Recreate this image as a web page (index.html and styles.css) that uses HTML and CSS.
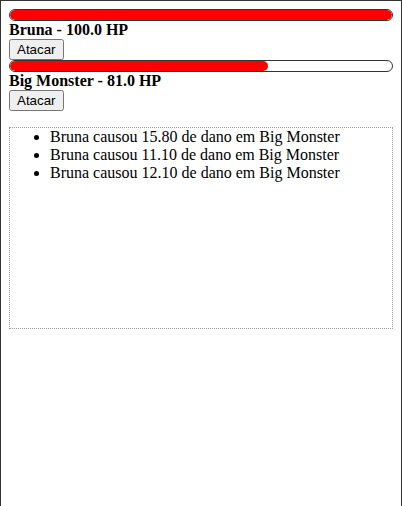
FILE: index.html
```html
<!DOCTYPE html>
<html>
<head>
<meta charset="utf-8">
<link rel="stylesheet" href="styles.css">
</head>
<body>
<div class="frame">
  <div class="fighter">
    <div class="bar"><div class="fill" style="width: 100%"></div></div>
    <div class="name">Bruna - 100.0 HP</div>
    <button class="attack">Atacar</button>
  </div>
  <div class="fighter">
    <div class="bar"><div class="fill" style="width: 67.5%"></div></div>
    <div class="name">Big Monster - 81.0 HP</div>
    <button class="attack">Atacar</button>
  </div>
  <ul class="log">
    <li>Bruna causou 15.80 de dano em Big Monster</li>
    <li>Bruna causou 11.10 de dano em Big Monster</li>
    <li>Bruna causou 12.10 de dano em Big Monster</li>
  </ul>
</div>
</body>
</html>
```
FILE: styles.css
```css
html, body {
  margin: 0;
  padding: 0;
}
body {
  font-family: "Liberation Serif", "Times New Roman", serif;
  font-size: 16px;
  color: #000;
  background: #fff;
}
.frame {
  box-sizing: border-box;
  min-height: 100vh;
  border: 1px solid #333;
  border-bottom: none;
  padding: 8px 8px 0 8px;
}
.bar {
  height: 10px;
  border: 1px solid #333;
  border-radius: 6px;
  overflow: hidden;
  background: #fff;
}
.fill {
  height: 100%;
  background: #ff0000;
  border-radius: 6px;
}
.name {
  font-weight: bold;
  line-height: 18px;
}
.attack {
  font-family: "Liberation Sans", Arial, sans-serif;
  font-size: 13.333px;
  margin: 0;
  display: block;
}
.log {
  margin: 16px 0;
  padding: 0 0 0 40px;
  height: 200px;
  border: 1px dotted #999;
  overflow: auto;
}
.log li {
  line-height: 18px;
}
```
